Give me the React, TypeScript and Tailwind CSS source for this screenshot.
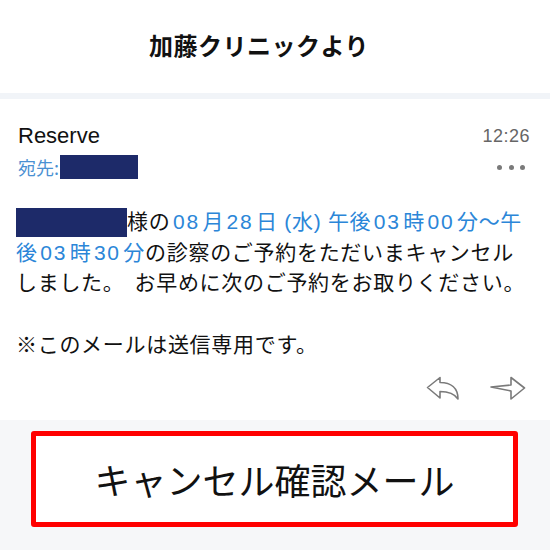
import React from "react";

const font = { fontFamily: '"Liberation Sans", "Noto Sans CJK JP", sans-serif' };

function ReplyIcon() {
  return (
    <svg width="34" height="25" viewBox="0 0 34 25" fill="none" stroke="#7a7a7a" strokeWidth="1.6" strokeLinejoin="round">
      <path d="M1.5 11.5 L14 1.5 L14 6.5 C25 6.5 32 12 32 23 C28 17 22 15.5 14 15.5 L14 22 Z" />
    </svg>
  );
}

function ForwardIcon() {
  return (
    <svg width="36" height="25" viewBox="0 0 36 25" fill="none" stroke="#7a7a7a" strokeWidth="1.6" strokeLinejoin="round">
      <path d="M1 11 L21 9 L21 1.5 L34.5 12 L21 23 L21 15 Z" />
    </svg>
  );
}

function Num({ children }: { children: React.ReactNode }) {
  return <span className="mx-[2.5px] tracking-[1.8px]">{children}</span>;
}

export default function App() {
  return (
    <div className="w-[550px] h-[550px] bg-white flex flex-col overflow-hidden" style={font}>
      <div className="h-[93px] flex items-center justify-center pr-[32px]">
        <span className="text-[24px] font-bold text-[#111] tracking-[0.5px]">加藤クリニックより</span>
      </div>
      <div className="h-[6px] bg-[#f1f4f8]" />
      <div className="h-[321px] px-[16px] pt-[25px] flex flex-col">
        <div className="flex justify-between items-start">
          <span className="ml-[2px] text-[22px] leading-[24px] text-[#111]">Reserve</span>
          <span className="mr-[4px] mt-[2px] text-[18px] leading-[20px] text-[#666] tracking-[0.5px]">12:26</span>
        </div>
        <div className="flex justify-between items-center mt-[7px] h-[24px]">
          <div className="flex items-center ml-[2px]">
            <span className="text-[18px] leading-[24px] text-[#4a90d2]" style={{ fontFamily: '"Noto Sans CJK JP", sans-serif' }}>宛先:</span>
            <span className="inline-block w-[78px] h-[24px] bg-[#1d2a69] ml-[1px]" />
          </div>
          <div className="flex gap-[6.5px] mr-[9px]">
            <span className="w-[5px] h-[5px] rounded-full bg-[#7a7a7a]" />
            <span className="w-[5px] h-[5px] rounded-full bg-[#7a7a7a]" />
            <span className="w-[5px] h-[5px] rounded-full bg-[#7a7a7a]" />
          </div>
        </div>
        <div className="mt-[28px] text-[21px] leading-[30.7px] text-[#111] whitespace-nowrap tracking-[0.7px]">
          <div className="flex items-center">
            <span className="inline-block w-[111px] h-[29px] bg-[#1d2a69]" />
            <span>様の</span>
            <span className="text-[#2b86d8]">
              <Num>08</Num>月<Num>28</Num>日 (水) 午後<Num>03</Num>時<Num>00</Num>分〜午
            </span>
          </div>
          <div>
            <span className="text-[#2b86d8]">
              後<Num>03</Num>時<Num>30</Num>分
            </span>
            の診察のご予約をただいまキャンセル
          </div>
          <div>
            しました。<span className="inline-block w-[10px]" />お早めに次のご予約をお取りください。
          </div>
          <div className="h-[30.7px]" />
          <div>※このメールは送信専用です。</div>
        </div>
        <div className="flex justify-end items-center gap-[30px] mt-[15px] mr-[8px]">
          <ReplyIcon />
          <ForwardIcon />
        </div>
      </div>
      <div className="flex-1 bg-[#f6f7f9] pt-[11px] pl-[31px]">
        <div className="w-[487px] h-[96px] border-[5px] border-[#ff0000] rounded-[3px] bg-white flex items-center justify-center">
          <span className="text-[36px] text-[#111]" style={{ fontFamily: '"Noto Sans CJK JP", sans-serif' }}>キャンセル確認メール</span>
        </div>
      </div>
    </div>
  );
}
